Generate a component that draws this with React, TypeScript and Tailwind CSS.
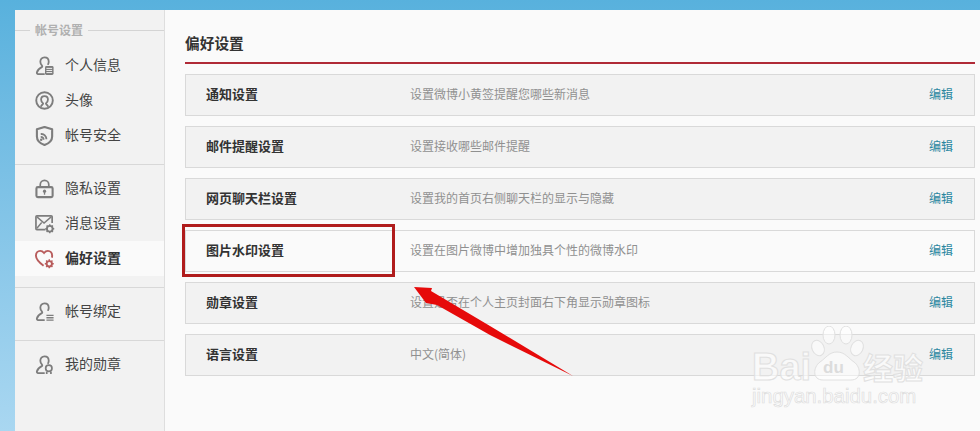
const cjk = 'font-["Noto_Sans_CJK_SC","Liberation_Sans",sans-serif]';

const Person = ({ children }: { children?: React.ReactNode }) => (
  <>
    <path d="M10 1.5c-2.7 0-4.4 2-4.4 4.5 0 1.8.8 3.2 1.8 4.2.4.5.3 1.2-.3 1.5-1.700.9-4.300 2.800-5.100 5.500-.3 1 .2 1.800 1.300 1.800h6.200M10 1.500c2.700 0 4.400 2 4.400 4.500 0 1-.2 1.800-.6 2.500" fill="none" stroke="currentColor" strokeWidth="1.900" strokeLinecap="round" />
    {children}
  </>
);

const icons: Record<string, React.ReactNode> = {
  info: (
    <Person>
      <rect x="10.500" y="10.500" width="9" height="9.500" rx="1.500" fill="currentColor" />
      <path d="M12 13h6M12 15.200h6M12 17.400h6" stroke="#f2f2f2" strokeWidth="1" />
    </Person>
  ),
  avatar: (
    <>
      <circle cx="10" cy="10" r="8.700" fill="none" stroke="currentColor" strokeWidth="2" />
      <path d="M6.200 16.500c.4-2 2.300-2.200 2.300-3.500-1.300-1-2.100-2.300-2.100-4 0-2.200 1.500-3.600 3.600-3.600s3.600 1.400 3.600 3.600c0 1.700-.8 3-2.100 4 0 1.300 1.900 1.500 2.300 3.500" fill="none" stroke="currentColor" strokeWidth="1.900" />
    </>
  ),
  shield: (
    <>
      <path d="M10 1 18 3.500v7.500c0 4.500-4 7.500-8 9-4-1.500-8-4.500-8-9V3.500z" fill="none" stroke="currentColor" strokeWidth="2.200" strokeLinejoin="round" />
      <path d="M6 8.500c3.500-.5 6 2 6 5.500M6 11.500c1.800 0 3 1.200 3 3" fill="none" stroke="currentColor" strokeWidth="1.900" />
      <circle cx="6.500" cy="14.500" r="1.300" fill="currentColor" />
    </>
  ),
  lock: (
    <>
      <path d="M5.500 8.500V6a4.500 4.500 0 0 1 9 0v2.500" fill="none" stroke="currentColor" strokeWidth="1.800" />
      <rect x="1.500" y="8.500" width="17" height="10.500" rx="1.500" fill="none" stroke="currentColor" strokeWidth="2.200" />
      <circle cx="10" cy="12.800" r="1.700" fill="currentColor" />
      <rect x="9.300" y="13" width="1.400" height="3.500" fill="currentColor" />
    </>
  ),
  mail: (
    <>
      <path d="M11 16.500H2a1 1 0 0 1-1-1V3a1 1 0 0 1 1-1h15a1 1 0 0 1 1 1v6.500" fill="none" stroke="currentColor" strokeWidth="1.800" />
      <path d="m2 3 7.500 6.500L17 3M2 15l5-6" fill="none" stroke="currentColor" strokeWidth="1.500" />
      <circle cx="15.500" cy="15.500" r="3" fill="none" stroke="currentColor" strokeWidth="2" />
      <path d="M15.500 10.800v2M15.500 18.200v2M10.800 15.500h2M18.200 15.500h2M12.200 12.200l1.400 1.400M17.400 17.400l1.400 1.400M12.200 18.800l1.400-1.400M17.400 13.600l1.400-1.400" stroke="currentColor" strokeWidth="1.500" />
    </>
  ),
  heart: (
    <>
      <path d="M9 17.500C5 14.500 1 11.500 1 7c0-3 2-5 4.500-5C7 2 8.400 2.800 9.500 4.200 10.600 2.800 12 2 13.500 2 16 2 18 4 18 7c0 .8-.1 1.500-.3 2" fill="none" stroke="#b85c5c" strokeWidth="2" />
      <circle cx="15" cy="15.500" r="2.800" fill="none" stroke="#b85c5c" strokeWidth="2" />
      <path d="M15 10.800v2M15 18.200v2M10.300 15.500h2M17.700 15.500h2M11.700 12.200l1.400 1.400M16.900 17.400l1.400 1.400M11.700 18.800l1.400-1.400M16.900 13.600l1.400-1.400" stroke="#b85c5c" strokeWidth="1.500" />
    </>
  ),
  bind: (
    <Person>
      <path d="M12 14h7.500M12 16.500h7.500M12 19h7.500" stroke="currentColor" strokeWidth="1.400" />
    </Person>
  ),
  medal: (
    <Person>
      <circle cx="14.500" cy="14" r="3.300" fill="none" stroke="currentColor" strokeWidth="1.800" />
      <path d="M12.300 17.500V20M16.700 17.500V20" stroke="currentColor" strokeWidth="1.800" />
    </Person>
  ),
};

const groups = [
  [
    { icon: 'info', label: '个人信息' },
    { icon: 'avatar', label: '头像' },
    { icon: 'shield', label: '帐号安全' },
  ],
  [
    { icon: 'lock', label: '隐私设置' },
    { icon: 'mail', label: '消息设置' },
    { icon: 'heart', label: '偏好设置', active: true },
  ],
  [{ icon: 'bind', label: '帐号绑定' }],
  [{ icon: 'medal', label: '我的勋章' }],
];

const rows = [
  { title: '通知设置', desc: '设置微博小黄签提醒您哪些新消息' },
  { title: '邮件提醒设置', desc: '设置接收哪些邮件提醒' },
  { title: '网页聊天栏设置', desc: '设置我的首页右侧聊天栏的显示与隐藏' },
  { title: '图片水印设置', desc: '设置在图片微博中增加独具个性的微博水印', hover: true },
  { title: '勋章设置', desc: '设置是否在个人主页封面右下角显示勋章图标' },
  { title: '语言设置', desc: '中文(简体)' },
];

export default function App() {
  return (
    <div className={`relative flex h-[431px] w-[980px] overflow-hidden bg-gradient-to-b from-[#58b1dd] to-[#a9d7f1] pl-[15px] pt-[10px] ${cjk}`}>
      <aside className="h-full w-[150px] shrink-0 border-r border-[#dedede] bg-[#f2f2f2]">
        <div className="mt-[10px] flex h-[21px] items-center gap-[5px] pb-[1px]">
          <span className="h-px w-[15px] bg-[#d4d4d4]" />
          <span className="text-[12px] font-bold text-[#b0b0b0]">帐号设置</span>
          <span className="h-px flex-1 bg-[#d4d4d4]" />
        </div>
        <div className="pt-[7px]">
          {groups.map((items, i) => (
            <div
              key={i}
              className={i < groups.length - 1 ? 'mb-[6px] border-b border-[#d8d8d8] pb-[11px]' : ''}
            >
              {items.map((item) => (
                <div
                  key={item.label}
                  className={`flex h-[35px] items-center gap-[10px] pl-[20px] text-[14px] ${
                    'active' in item ? 'bg-[#fafafa] font-bold text-[#333333]' : 'text-[#444444]'
                  }`}
                >
                  <svg viewBox="0 0 21 21" className="h-[20px] w-[20px] shrink-0 text-[#7d7d7d]">
                    {icons[item.icon]}
                  </svg>
                  <span className="pb-[2px]">{item.label}</span>
                </div>
              ))}
            </div>
          ))}
        </div>
      </aside>

      <main className="h-full flex-1 bg-[#fafafa] pl-[20px] pr-[5px]">
        <h1 className="flex h-[54px] items-end border-b-2 border-[#b02a37] pb-[8px] text-[14.700px] font-bold text-[#333333]">
          偏好设置
        </h1>
        <div className="mt-[10px] flex flex-col gap-[10px]">
          {rows.map((row) => (
            <div
              key={row.title}
              className={`flex h-[42px] items-center border border-[#d9d9d9] pb-[2px] pl-[20px] pr-[21px] ${
                row.hover ? 'bg-[#fafafa]' : 'bg-[#f2f2f2]'
              }`}
            >
              <span className="w-[204px] shrink-0 text-[13px] font-bold text-[#333333]">{row.title}</span>
              <span className="flex-1 text-[12px] text-[#909090]">{row.desc}</span>
              <span className="text-[12px] text-[#2b87a0]">编辑</span>
            </div>
          ))}
        </div>
      </main>

      {/* red annotation box */}
      <div className="absolute left-[182px] top-[224px] h-[53px] w-[213px] border-[3px] border-[#b01c1c]" />

      {/* annotation arrow */}
      <svg className="pointer-events-none absolute left-0 top-0 h-[431px] w-[980px]" viewBox="0 0 980 431">
        <polygon points="414,287 432,288 431,291 490,326 573,376 490,335 437,305 426,303" fill="#e60a0a" />
      </svg>

      {/* baidu watermark */}
      <div className="pointer-events-none absolute left-[752px] top-[326px] h-[90px] w-[176px]">
        <svg className="absolute left-0 top-0 h-[90px] w-[176px]" viewBox="0 0 176 90" fill="#ffffff" fillOpacity="0.5" stroke="#e0e0e0">
          <ellipse cx="66" cy="22" rx="6" ry="8" transform="rotate(-25 66 22)" />
          <ellipse cx="77" cy="9" rx="6" ry="9" />
          <ellipse cx="94" cy="9" rx="6" ry="9" />
          <ellipse cx="105" cy="22" rx="6" ry="8" transform="rotate(25 105 22)" />
          <path d="M85 26c8 0 11 6 17 10 7 5 8 18-3 18H71c-11 0-10-13-3-18 6-4 9-10 17-10z" />
        </svg>
        <span className="absolute left-0 top-[22px] text-[38px] font-bold leading-none text-white/60 [-webkit-text-stroke:1px_#e0e0e0] font-['Liberation_Sans',sans-serif]">
          Bai
        </span>
        <span className="absolute left-[71px] top-[33px] text-[17px] font-bold leading-none text-[#dcdcdc] font-['Liberation_Sans',sans-serif]">
          du
        </span>
        <span className="absolute left-[111px] top-[25px] text-[30px] font-bold leading-none text-white/60 [-webkit-text-stroke:1px_#e0e0e0]">
          经验
        </span>
        <span className="absolute left-0 top-[60px] text-[20.400px] leading-none text-white/60 [-webkit-text-stroke:0.7px_#dedede] font-['Liberation_Sans',sans-serif]">
          jingyan.baidu.com
        </span>
      </div>
    </div>
  );
}
